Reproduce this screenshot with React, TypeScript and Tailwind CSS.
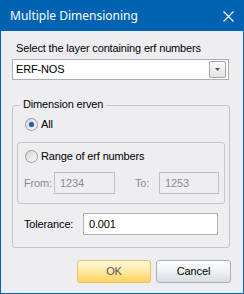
const ui = { fontFamily: '"Liberation Sans", Arial, sans-serif', letterSpacing: '-0.15px' };

function Radio({ label, checked }: { label: string; checked?: boolean }) {
  return (
    <div className="flex items-center h-[13px]">
      <span className="w-[13px] h-[13px] rounded-full border border-[#9a9b9c] bg-gradient-to-br from-[#d4d4d6] to-[#fbfbfb] flex items-center justify-center">
        {checked && <span className="w-[5px] h-[5px] rounded-full bg-[#2a5aa8] shadow-[0_0_1px_#6b8fcf]" />}
      </span>
      <span className="ml-[3px] text-[11px] leading-[13px] text-black">{label}</span>
    </div>
  );
}

function TextBox({ value, disabled, width }: { value: string; disabled?: boolean; width: string }) {
  return (
    <div
      className={`h-[22px] ${width} border flex items-center pl-[5px] text-[11px] ${
        disabled ? 'border-[#bfbfc4] bg-[#eeeef2] text-[#8a8a8e]' : 'border-[#b4b4b8] bg-white text-black'
      }`}
    >
      {value}
    </div>
  );
}

export default function App() {
  return (
    <div className="w-[244px] h-[294px] border border-[#0063b1] bg-[#eeeef2] flex flex-col" style={ui}>
      {/* title bar */}
      <div className="h-[30px] bg-[#0063b1] flex items-center justify-between pl-[9px] pr-[9px] -mt-px pt-px box-content">
        <span className="text-white text-[12px] leading-[16px] tracking-normal" style={{ fontFamily: '"Noto Sans", "Open Sans", sans-serif' }}>
          Multiple Dimensioning
        </span>
        <svg width="11" height="11" viewBox="0 0 11 11" className="mt-px">
          <path d="M0.5 0.5 L10.5 10.5 M10.5 0.5 L0.5 10.5" stroke="white" strokeWidth="1.2" />
        </svg>
      </div>

      <div className="flex flex-col pl-[11px]">
        <div className="mt-[11px] text-[11px] leading-[13px] text-black pl-[4px]">Select the layer containing erf numbers</div>

        {/* combobox */}
        <div className="mt-[4px] w-[217px] h-[21px] border border-[#abadb3] bg-white flex items-center justify-between pl-[3px] pr-[2px]">
          <span className="text-[11px] text-black">ERF-NOS</span>
          <span className="w-[17px] h-[17px] border border-[#a4a4a8] rounded-[2px] bg-gradient-to-b from-[#fafafa] to-[#e2e3e6] flex items-center justify-center">
            <svg width="5" height="3" viewBox="0 0 5 3">
              <path d="M0 0 H5 L2.5 3 Z" fill="#5a5a5a" />
            </svg>
          </span>
        </div>

        {/* outer group */}
        <div className="relative mt-[25px] w-[218px] h-[143px] border border-[#c6c6ca] rounded-[3px] pl-[4px] flex flex-col">
          <span className="absolute -top-[8px] left-[7px] px-[3px] bg-[#eeeef2] text-[11px] leading-[13px] text-black">
            Dimension erven
          </span>
          <div className="mt-[12px] pl-[8px]">
            <Radio label="All" checked />
          </div>

          {/* inner group */}
          <div className="mt-[11px] w-[208px] h-[62px] border border-[#c6c6ca] rounded-[3px] flex flex-col">
            <div className="mt-[7px] pl-[7px]">
              <Radio label="Range of erf numbers" />
            </div>
            <div className="mt-[9px] flex items-center">
              <span className="w-[36px] pl-[6px] text-[11px] text-[#8a8a8e]">From:</span>
              <TextBox value="1234" disabled width="w-[61px]" />
              <span className="w-[44px] pl-[20px] text-[11px] text-[#8a8a8e]">To:</span>
              <TextBox value="1253" disabled width="w-[60px]" />
            </div>
          </div>

          <div className="mt-[9px] flex items-center">
            <span className="w-[66px] pl-[7px] text-[11px] text-black">Tolerance:</span>
            <TextBox value="0.001" width="w-[135px]" />
          </div>
        </div>

        {/* buttons */}
        <div className="mt-[12px] flex justify-end gap-[5px] w-[219px]">
          <button className="w-[74px] h-[23px] rounded-[3px] border border-[#e6c36a] bg-gradient-to-b from-[#fff8dc] via-[#ffe9a0] to-[#ffd257] text-[11px] text-[#555]">
            OK
          </button>
          <button className="w-[75px] h-[23px] rounded-[3px] border border-[#a9b0b8] bg-gradient-to-b from-[#fdfdfd] via-[#eef0f2] to-[#d9dde2] text-[11px] text-black">
            Cancel
          </button>
        </div>
      </div>
    </div>
  );
}
